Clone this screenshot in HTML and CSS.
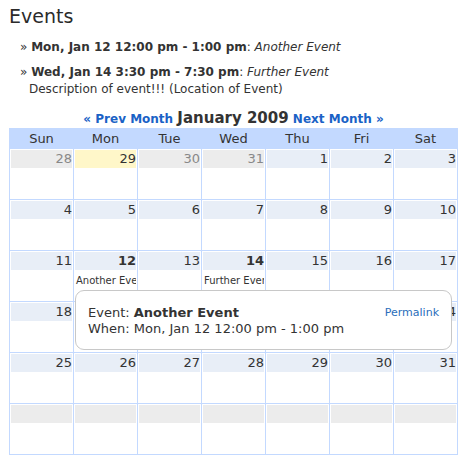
FILE: index.html
```html
<!DOCTYPE html>
<html>
<head>
<meta charset="utf-8">
<link rel="stylesheet" href="styles.css">
</head>
<body>
<div class="page">
  <h2 class="title">Events</h2>
  <ul class="events">
    <li><span class="raquo">»</span> <b>Mon, Jan 12 12:00 pm - 1:00 pm</b>: <i>Another Event</i></li>
    <li><span class="raquo">»</span> <b>Wed, Jan 14 3:30 pm - 7:30 pm</b>: <i>Further Event</i>
      <div class="desc">Description of event!!! (Location of Event)</div></li>
  </ul>
  <div class="calwrap">
    <div class="nav"><a class="navlink">« Prev Month</a> <span class="month">January 2009</span> <a class="navlink">Next Month »</a></div>
    <div class="cal">
      <div class="hd">Sun</div><div class="hd">Mon</div><div class="hd">Tue</div><div class="hd">Wed</div><div class="hd">Thu</div><div class="hd">Fri</div><div class="hd">Sat</div>

      <div class="cell"><div class="day other">28</div></div>
      <div class="cell"><div class="day today">29</div></div>
      <div class="cell"><div class="day other">30</div></div>
      <div class="cell"><div class="day other">31</div></div>
      <div class="cell"><div class="day">1</div></div>
      <div class="cell"><div class="day">2</div></div>
      <div class="cell"><div class="day">3</div></div>

      <div class="cell"><div class="day">4</div></div>
      <div class="cell"><div class="day">5</div></div>
      <div class="cell"><div class="day">6</div></div>
      <div class="cell"><div class="day">7</div></div>
      <div class="cell"><div class="day">8</div></div>
      <div class="cell"><div class="day">9</div></div>
      <div class="cell"><div class="day">10</div></div>

      <div class="cell"><div class="day">11</div></div>
      <div class="cell"><div class="day bold">12</div><div class="ev">Another Event</div></div>
      <div class="cell"><div class="day">13</div></div>
      <div class="cell"><div class="day bold">14</div><div class="ev">Further Event</div></div>
      <div class="cell"><div class="day">15</div></div>
      <div class="cell"><div class="day">16</div></div>
      <div class="cell"><div class="day">17</div></div>

      <div class="cell"><div class="day">18</div></div>
      <div class="cell"><div class="day">19</div></div>
      <div class="cell"><div class="day">20</div></div>
      <div class="cell"><div class="day">21</div></div>
      <div class="cell"><div class="day">22</div></div>
      <div class="cell"><div class="day">23</div></div>
      <div class="cell"><div class="day">24</div></div>

      <div class="cell"><div class="day">25</div></div>
      <div class="cell"><div class="day">26</div></div>
      <div class="cell"><div class="day">27</div></div>
      <div class="cell"><div class="day">28</div></div>
      <div class="cell"><div class="day">29</div></div>
      <div class="cell"><div class="day">30</div></div>
      <div class="cell"><div class="day">31</div></div>

      <div class="cell"><div class="day other"></div></div>
      <div class="cell"><div class="day other"></div></div>
      <div class="cell"><div class="day other"></div></div>
      <div class="cell"><div class="day other"></div></div>
      <div class="cell"><div class="day other"></div></div>
      <div class="cell"><div class="day other"></div></div>
      <div class="cell"><div class="day other"></div></div>
    </div>
    <div class="tip">
      <a class="permalink">Permalink</a>
      <div>Event: <b>Another Event</b></div>
      <div>When: Mon, Jan 12 12:00 pm - 1:00 pm</div>
    </div>
  </div>
</div>
</body>
</html>
```
FILE: styles.css
```css
html, body { margin: 0; padding: 0; background: #fff; }
body { font-family: "DejaVu Sans", Verdana, sans-serif; color: #333; }
.page { padding: 5px 0 0 9px; }
.title { margin: 0; font-size: 19px; font-weight: normal; line-height: 22px; color: #2b2b2b; }
.events { list-style: none; margin: 12px 0 0 0; padding: 0 0 0 11px; font-size: 12px; }
.events li { line-height: 17px; margin-bottom: 8px; }
.events li:last-child { margin-bottom: 0; }
.raquo { font-size: 12px; }
.desc { padding-left: 9px; }
.calwrap { position: relative; width: 449px; margin-top: 11px; }
.nav { text-align: center; font-size: 12px; font-weight: bold; line-height: 18px; }
.navlink { color: #1a62c6; }
.month { font-size: 15px; color: #333; }
.cal { display: grid; grid-template-columns: repeat(7, 63px); grid-auto-rows: 50px; grid-template-rows: 19px; gap: 1px; padding: 1px; background: #c3d9ff; }
.hd { background: #c3d9ff; text-align: center; font-size: 13px; line-height: 19px; color: #333; }
.cell { background: #fff; padding: 1px; overflow: hidden; }
.day { height: 18px; line-height: 18px; background: #e8eef7; text-align: right; padding-right: 0; font-size: 13px; color: #333; }
.day.other { background: #ececec; color: #888; }
.day.today { background: #fff7c9; color: #333; }
.day.bold { font-weight: bold; }
.ev { font-size: 10px; white-space: nowrap; overflow: hidden; padding: 4px 0 0 1px; line-height: 13px; color: #333; }
.tip { position: absolute; left: 66px; top: 181px; width: 351px; height: 42px; padding: 14px 12px 2px 12px; border: 1px solid #c8c8c8; border-radius: 9px; background: #fff; font-size: 13px; line-height: 16px; color: #333; }
.permalink { position: absolute; right: 12px; top: 14px; font-size: 11px; line-height: 16px; color: #2a6ebb; }
```
